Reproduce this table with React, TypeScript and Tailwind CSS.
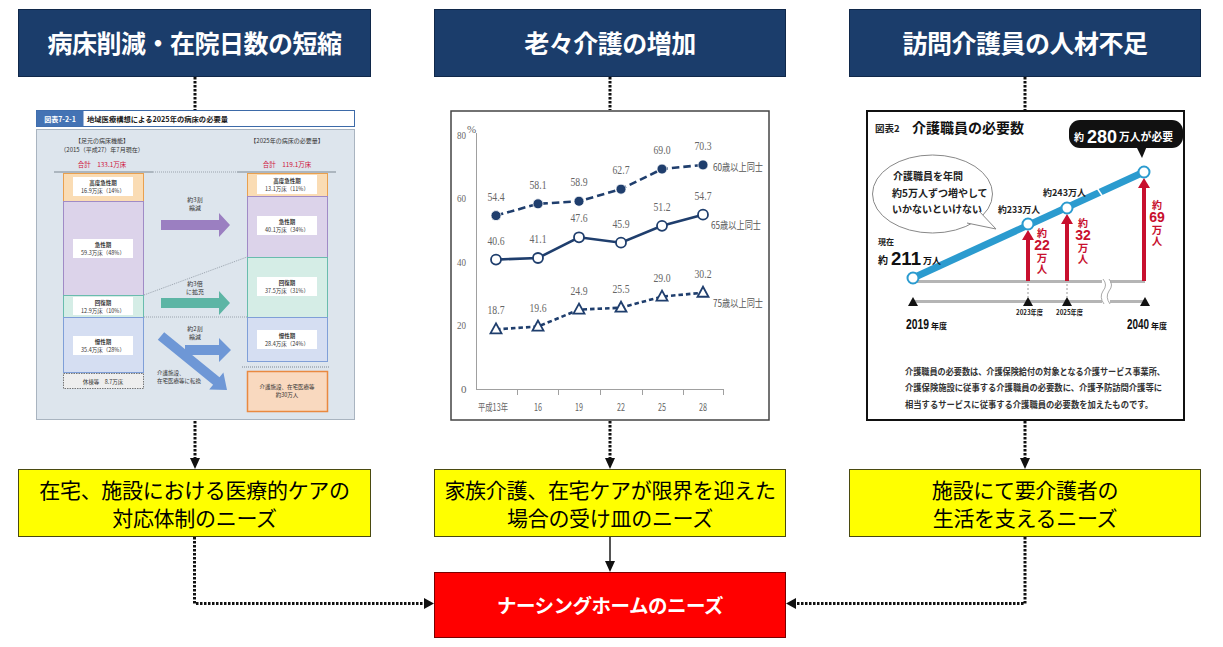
const JP = "'Noto Sans CJK JP', sans-serif"
const SERIF = "'Liberation Serif', 'Noto Sans CJK JP', serif"

function DotDown({ h, arrow }: { h: number; arrow?: boolean }) {
  const end = arrow ? h - 10 : h
  return (
    <svg width="12" height={h} className="block shrink-0">
      <line x1="6" y1="0" x2="6" y2={end} stroke="#111" strokeWidth="3" strokeDasharray="2.5 1.5" />
      {arrow && <polygon points={`1,${h - 11} 11,${h - 11} 6,${h}`} fill="#111" />}
    </svg>
  )
}

function Lbl({ cx, y, a, b, h = 19 }: { cx: number; y: number; a: string; b: string; h?: number }) {
  return (
    <g>
      <rect x={cx - 30} y={y} width="60" height={h} fill="#fff" />
      <text x={cx} y={y + 8} fontSize="5.5" fontWeight="700" textAnchor="middle" fill="#333">{a}</text>
      <text x={cx} y={y + 15.5} fontSize="5.5" textAnchor="middle" fill="#333">{b}</text>
    </g>
  )
}

function LeftChart() {
  return (
    <svg width="320" height="311" viewBox="35 110 320 311" className="block" fontFamily={JP}>
      {/* title bar */}
      <rect x="36.5" y="110.5" width="318" height="16" fill="#fff" stroke="#3d6aa8" />
      <rect x="36.5" y="110.5" width="47" height="16" fill="#4473b4" />
      <text x="60" y="121.5" fontSize="7" fontWeight="700" fill="#fff" textAnchor="middle">図表7-2-1</text>
      <text x="87" y="121.5" fontSize="7.3" fontWeight="700" fill="#1a1a1a">地域医療構想による2025年の病床の必要量</text>
      {/* body */}
      <rect x="36.5" y="129.5" width="318" height="290" fill="#dde5ed" stroke="#a9b4c0" />
      <text x="102" y="143" fontSize="6" textAnchor="middle" fill="#333">【足元の病床機能】</text>
      <text x="102" y="152" fontSize="6" textAnchor="middle" fill="#333">（2015（平成27）年7月現在）</text>
      <text x="102" y="167" fontSize="6.5" textAnchor="middle" fill="#d0143c">合計　133.1万床</text>
      <text x="287" y="143" fontSize="6" textAnchor="middle" fill="#333">【2025年の病床の必要量】</text>
      <text x="287" y="167" fontSize="6.5" textAnchor="middle" fill="#d0143c">合計　119.1万床</text>
      <line x1="54" y1="172" x2="153" y2="172" stroke="#7d8792" strokeWidth="1.2" />
      <line x1="153" y1="172" x2="237" y2="172" stroke="#9aa3ad" strokeWidth="1" strokeDasharray="1 1" />
      <line x1="237" y1="172" x2="336" y2="172" stroke="#7d8792" strokeWidth="1.2" />

      {/* left bar */}
      <rect x="63.5" y="173.5" width="80" height="28" fill="#fadcb4" stroke="#e9a04f" />
      <rect x="63.5" y="201.5" width="80" height="94" fill="#dcd3ea" stroke="#a08bc6" />
      <rect x="63.5" y="295.5" width="80" height="22" fill="#d5ede6" stroke="#69bcae" />
      <rect x="63.5" y="317.5" width="80" height="55" fill="#d5def2" stroke="#7f9fd8" />
      <rect x="63.5" y="373.5" width="80" height="15" fill="#eeeeee" stroke="#777" strokeDasharray="1.5 1" />
      <Lbl cx={103} y={177} a="高度急性期" b="16.9万床（14%）" />
      <Lbl cx={103} y={239} a="急性期" b="59.3万床（48%）" />
      <Lbl cx={103} y={297} a="回復期" b="12.9万床（10%）" h={18} />
      <Lbl cx={103} y={336} a="慢性期" b="35.4万床（28%）" />
      <text x="103" y="383.5" fontSize="5.5" textAnchor="middle" fill="#333">休棟等　8.7万床</text>

      {/* right bar */}
      <rect x="247.5" y="173.5" width="80" height="23" fill="#fadcb4" stroke="#e9a04f" />
      <rect x="247.5" y="196.5" width="80" height="61" fill="#dcd3ea" stroke="#a08bc6" />
      <rect x="247.5" y="257.5" width="80" height="60" fill="#d5ede6" stroke="#69bcae" />
      <rect x="247.5" y="317.5" width="80" height="44" fill="#d5def2" stroke="#7f9fd8" />
      <Lbl cx={287} y={175} a="高度急性期" b="13.1万床（11%）" />
      <Lbl cx={287} y={216} a="急性期" b="40.1万床（34%）" />
      <Lbl cx={287} y={277} a="回復期" b="37.5万床（31%）" />
      <Lbl cx={287} y={330} a="慢性期" b="28.4万床（24%）" />
      <line x1="242" y1="367" x2="330" y2="367" stroke="#7d8792" strokeDasharray="1 1" />
      <rect x="247.5" y="371.5" width="80" height="40" fill="#f9d9bf" stroke="#e98940" strokeWidth="1.5" />
      <text x="287" y="389" fontSize="5.5" textAnchor="middle" fill="#333">介護施設、在宅医療等</text>
      <text x="287" y="397" fontSize="5.5" textAnchor="middle" fill="#333">約30万人</text>

      {/* guide lines */}
      <line x1="144" y1="295" x2="247" y2="257" stroke="#9aa3ad" strokeDasharray="1 1" />
      <line x1="144" y1="317" x2="247" y2="317" stroke="#9aa3ad" strokeDasharray="1 1" />

      {/* arrows */}
      <polygon points="161,220 219,220 219,213 230,225 219,237 219,230 161,230" fill="#9b7fc1" />
      <text x="195" y="202" fontSize="6" textAnchor="middle" fill="#333">約3割</text>
      <text x="195" y="210" fontSize="6" textAnchor="middle" fill="#333">縮減</text>
      <polygon points="161,298 219,298 219,291 230,303 219,315 219,308 161,308" fill="#5db5a5" />
      <text x="195" y="286" fontSize="6" textAnchor="middle" fill="#333">約3倍</text>
      <text x="195" y="294" fontSize="6" textAnchor="middle" fill="#333">に拡充</text>
      <polygon points="157.8,339.8 213.1,384.8 209.2,389.4 227,390 223.4,372.6 219.5,377.2 164.2,332.2" fill="#6e97d6" />
      <polygon points="185,345 219,345 219,338 231,350 219,362 219,355 185,355" fill="#6e97d6" />
      <text x="195" y="331" fontSize="6" textAnchor="middle" fill="#333">約2割</text>
      <text x="195" y="339" fontSize="6" textAnchor="middle" fill="#333">縮減</text>
      <text x="157" y="375" fontSize="5.5" fill="#333">介護施設、</text>
      <text x="157" y="383" fontSize="5.5" fill="#333">在宅医療等に転換</text>
    </svg>
  )
}

const XS = [496, 538, 579, 621, 662, 703]
const yv = (v: number) => 389 - v * 3.1875
const S60 = [54.4, 58.1, 58.9, 62.7, 69.0, 70.3]
const S65 = [40.6, 41.1, 47.6, 45.9, 51.2, 54.7]
const S75 = [18.7, 19.6, 24.9, 25.5, 29.0, 30.2]
const NAVY = '#1f3e6d'

function pts(s: number[]) {
  return s.map((v, i) => `${XS[i]},${yv(v)}`).join(' ')
}

function MiddleChart() {
  return (
    <svg width="320" height="311" viewBox="450 110 320 311" className="block" fontFamily={SERIF}>
      <rect x="451" y="111" width="318" height="309" fill="#fff" stroke="#444" strokeWidth="1.5" />
      <line x1="476.5" y1="133" x2="476.5" y2="389" stroke="#a0a0a0" />
      <line x1="476" y1="389.5" x2="723" y2="389.5" stroke="#a0a0a0" />
      {[517, 558, 600, 642, 683, 723].map((x) => (
        <line key={x} x1={x + 0.5} y1="389" x2={x + 0.5} y2="395" stroke="#a0a0a0" />
      ))}
      <text x="457" y="139" fontSize="11" fill="#666" textLength="9" lengthAdjust="spacingAndGlyphs">80</text>
      <text x="467" y="133" fontSize="11" fill="#666">%</text>
      <text x="457" y="202" fontSize="11" fill="#666" textLength="9" lengthAdjust="spacingAndGlyphs">60</text>
      <text x="457" y="266" fontSize="11" fill="#666" textLength="9" lengthAdjust="spacingAndGlyphs">40</text>
      <text x="457" y="329" fontSize="11" fill="#666" textLength="9" lengthAdjust="spacingAndGlyphs">20</text>
      <text x="461" y="393" fontSize="11" fill="#666">0</text>
      {['平成13年', '16', '19', '22', '25', '28'].map((t, i) => (
        <text key={t} x={i === 0 ? 478 : XS[i] - 4} y="411" fontSize="10.5" fill="#666" fontFamily={JP} textLength={i === 0 ? 30 : 8} lengthAdjust="spacingAndGlyphs">{t}</text>
      ))}

      <polyline points={pts(S60)} fill="none" stroke={NAVY} strokeWidth="2.6" strokeDasharray="7.5 4" />
      <polyline points={pts(S65)} fill="none" stroke={NAVY} strokeWidth="2.6" />
      <polyline points={pts(S75)} fill="none" stroke={NAVY} strokeWidth="2.6" strokeDasharray="4.5 3" />
      {S60.map((v, i) => (
        <circle key={'a' + i} cx={XS[i]} cy={yv(v)} r="5" fill={NAVY} stroke="#fff" strokeWidth="0.8" />
      ))}
      {S65.map((v, i) => (
        <circle key={'b' + i} cx={XS[i]} cy={yv(v)} r="5" fill="#fff" stroke={NAVY} strokeWidth="1.8" />
      ))}
      {S75.map((v, i) => {
        const y = yv(v)
        return <polygon key={'c' + i} points={`${XS[i]},${y - 6} ${XS[i] - 5.5},${y + 4} ${XS[i] + 5.5},${y + 4}`} fill="#fff" stroke={NAVY} strokeWidth="1.8" />
      })}
      {[S60, S65, S75].map((s, k) =>
        s.map((v, i) => (
          <text key={k + '-' + i} x={XS[i]} y={yv(v) - 15} fontSize="12" fill="#666" textAnchor="middle" textLength="17" lengthAdjust="spacingAndGlyphs">
            {v.toFixed(1)}
          </text>
        ))
      )}
      <text x="713" y="171" fontSize="10" fill="#555" fontFamily={JP} textLength="50" lengthAdjust="spacingAndGlyphs">60歳以上同士</text>
      <text x="711" y="229" fontSize="10" fill="#555" fontFamily={JP} textLength="50" lengthAdjust="spacingAndGlyphs">65歳以上同士</text>
      <text x="713" y="307" fontSize="10" fill="#555" fontFamily={JP} textLength="50" lengthAdjust="spacingAndGlyphs">75歳以上同士</text>
    </svg>
  )
}

const BLUE = '#2b9bcf'
const RED = '#c8102e'

function RedArrow({ x, tip }: { x: number; tip: number }) {
  return (
    <g>
      <line x1={x} y1="281" x2={x} y2={tip + 9} stroke={RED} strokeWidth="4" />
      <polygon points={`${x - 6},${tip + 10} ${x + 6},${tip + 10} ${x},${tip}`} fill={RED} />
    </g>
  )
}

function RedTag({ x, y, n }: { x: number; y: number; n: string }) {
  return (
    <g fill={RED} fontWeight="700" textAnchor="middle">
      <text x={x} y={y} fontSize="10">約</text>
      <text x={x} y={y + 13} fontSize="14" fontFamily="'Liberation Sans', sans-serif">{n}</text>
      <text x={x} y={y + 25} fontSize="10.5">万</text>
      <text x={x} y={y + 36} fontSize="10.5">人</text>
    </g>
  )
}

function RightChart() {
  return (
    <svg width="320" height="311" viewBox="865 110 320 311" className="block" fontFamily={JP}>
      <rect x="867" y="111" width="317" height="309" fill="#fff" stroke="#111" strokeWidth="2" />
      <text x="875" y="132" fontSize="9.5" fontWeight="700" fill="#222">図表2</text>
      <text x="912" y="133" fontSize="14" fontWeight="700" fill="#111">介護職員の必要数</text>

      {/* callout */}
      <rect x="1069" y="120" width="114" height="28" rx="11" fill="#111" />
      <polygon points="1136,146 1147,146 1142,158" fill="#111" />
      <text x="1074" y="141" fontSize="10" fontWeight="700" fill="#fff">約</text>
      <text x="1087" y="143" fontSize="19" fontWeight="700" fill="#fff" fontFamily="'Liberation Sans', sans-serif" textLength="30" lengthAdjust="spacingAndGlyphs">280</text>
      <text x="1119" y="141" fontSize="10.8" fontWeight="700" fill="#fff">万人が必要</text>

      {/* bubble */}
      <ellipse cx="932.5" cy="194" rx="60" ry="39" fill="#fff" stroke="#888" />
      <path d="M967 223 L996 229 L979 211" fill="#fff" stroke="#888" />
      <text x="893" y="180" fontSize="10" fontWeight="700" fill="#222">介護職員を年間</text>
      <text x="892" y="197" fontSize="10" fontWeight="700" fill="#222">約5万人ずつ増やして</text>
      <text x="892" y="213" fontSize="10" fontWeight="700" fill="#222">いかないといけない</text>

      {/* timeline */}
      <line x1="913" y1="281.5" x2="1145" y2="281.5" stroke="#b5b5b5" strokeWidth="3" />
      <line x1="913" y1="301.5" x2="1145" y2="301.5" stroke="#b5b5b5" strokeWidth="3" />
      <rect x="1102" y="278" width="8" height="27" fill="#fff" />
      <path d="M1103 279 q5 6 0 12 q-4 6 1 13" fill="none" stroke="#aaa" />
      <path d="M1109 279 q5 6 0 12 q-4 6 1 13" fill="none" stroke="#aaa" />
      <line x1="1028" y1="284" x2="1028" y2="297" stroke="#999" strokeDasharray="2 2" />
      <line x1="1067" y1="284" x2="1067" y2="297" stroke="#999" strokeDasharray="2 2" />
      {[913, 1028, 1067, 1145].map((x) => (
        <polygon key={x} points={`${x - 5},306 ${x + 5},306 ${x},297`} fill="#111" />
      ))}

      {/* growth line */}
      <line x1="913" y1="278" x2="1144" y2="172" stroke={BLUE} strokeWidth="7" />
      <line x1="1097" y1="188" x2="1103" y2="197" stroke="#fff" strokeWidth="1.5" />
      <RedArrow x={1028} tip={230} />
      <RedArrow x={1067} tip={214} />
      <RedArrow x={1144} tip={178} />
      {[
        [913, 278],
        [1028, 224],
        [1067, 208],
        [1144, 172],
      ].map(([x, y]) => (
        <circle key={x} cx={x} cy={y} r="5.5" fill="#fff" stroke={BLUE} strokeWidth="2" />
      ))}

      <text x="878" y="245" fontSize="8" fontWeight="700" fill="#222">現在</text>
      <text x="878" y="264" fontSize="10" fontWeight="700" fill="#111">約</text>
      <text x="891" y="265" fontSize="18" fontWeight="700" fill="#111" fontFamily="'Liberation Sans', sans-serif" textLength="30" lengthAdjust="spacingAndGlyphs">211</text>
      <text x="923" y="264" fontSize="9" fontWeight="700" fill="#111">万人</text>
      <text x="998" y="213" fontSize="9.5" fontWeight="700" fill="#222" textLength="42" lengthAdjust="spacingAndGlyphs">約233万人</text>
      <text x="1043" y="196" fontSize="9.5" fontWeight="700" fill="#222" textLength="43" lengthAdjust="spacingAndGlyphs">約243万人</text>
      <RedTag x={1042} y={237} n="22" />
      <RedTag x={1083} y={227} n="32" />
      <RedTag x={1157} y={209} n="69" />

      <text x="906" y="329" fontSize="15" fontWeight="700" fill="#111" fontFamily="'Liberation Sans', sans-serif" textLength="23" lengthAdjust="spacingAndGlyphs">2019</text>
      <text x="931" y="329" fontSize="8" fontWeight="700" fill="#111">年度</text>
      <text x="1016" y="315" fontSize="7" fontWeight="700" fill="#222" textLength="27" lengthAdjust="spacingAndGlyphs">2023年度</text>
      <text x="1056" y="315" fontSize="7" fontWeight="700" fill="#222" textLength="27" lengthAdjust="spacingAndGlyphs">2025年度</text>
      <text x="1127" y="329" fontSize="15" fontWeight="700" fill="#111" fontFamily="'Liberation Sans', sans-serif" textLength="22" lengthAdjust="spacingAndGlyphs">2040</text>
      <text x="1151" y="329" fontSize="8" fontWeight="700" fill="#111">年度</text>

      <g fontSize="9" fontWeight="700" fill="#333">
        <text x="905" y="375" textLength="260" lengthAdjust="spacingAndGlyphs">介護職員の必要数は、介護保険給付の対象となる介護サービス事業所、</text>
        <text x="905" y="391" textLength="257" lengthAdjust="spacingAndGlyphs">介護保険施設に従事する介護職員の必要数に、介護予防訪問介護等に</text>
        <text x="905" y="408" textLength="248" lengthAdjust="spacingAndGlyphs">相当するサービスに従事する介護職員の必要数を加えたものです。</text>
      </g>
    </svg>
  )
}

function Column({ w, title, chart, need }: { w: string; title: string; chart: React.ReactNode; need: string[] }) {
  return (
    <div className={`flex flex-col items-center ${w}`}>
      <div className="h-[68px] w-full bg-[#1b3d6b] border border-[#10284a] flex items-center justify-center text-white font-bold text-[25px] tracking-[-0.5px]">
        {title}
      </div>
      <DotDown h={33} />
      {chart}
      <DotDown h={48} arrow />
      <div className="h-[68px] w-full bg-[#ffff00] border border-[#4a4a10] flex flex-col items-center justify-center text-[21px] leading-[28px] text-black tracking-[-0.3px]">
        {need.map((n) => (
          <div key={n}>{n}</div>
        ))}
      </div>
    </div>
  )
}

export default function App() {
  return (
    <div className="w-[1223px] h-[647px] bg-white overflow-hidden font-['Noto_Sans_CJK_JP',sans-serif]">
      <div className="flex pt-[9px] pl-[18px] gap-x-[63px]">
        <Column w="w-[353px]" title="病床削減・在院日数の短縮" chart={<LeftChart />} need={['在宅、施設における医療的ケアの', '対応体制のニーズ']} />
        <Column w="w-[352px]" title="老々介護の増加" chart={<MiddleChart />} need={['家族介護、在宅ケアが限界を迎えた', '場合の受け皿のニーズ']} />
        <Column w="w-[352px]" title="訪問介護員の人材不足" chart={<RightChart />} need={['施設にて要介護者の', '生活を支えるニーズ']} />
      </div>
      <div className="flex">
        <svg width="434" height="101" className="block shrink-0">
          <path d="M194.5 0 V66.5 H424" fill="none" stroke="#111" strokeWidth="3" strokeDasharray="2.5 1.5" />
          <polygon points="424,61 424,72 434,66.5" fill="#111" />
        </svg>
        <div className="w-[352px] flex flex-col">
          <svg width="352" height="35" className="block">
            <line x1="176" y1="0" x2="176" y2="25" stroke="#555" strokeWidth="2" />
            <polygon points="171,24 181,24 176,35" fill="#111" />
          </svg>
          <div className="h-[66px] bg-[#ff0000] border border-[#7a0000] flex items-center justify-center text-white font-bold text-[19.5px] tracking-[-0.5px]">
            ナーシングホームのニーズ
          </div>
        </div>
        <svg width="437" height="101" className="block shrink-0">
          <path d="M239 0 V66.5 H10" fill="none" stroke="#111" strokeWidth="3" strokeDasharray="2.5 1.5" />
          <polygon points="10,61 10,72 0,66.5" fill="#111" />
        </svg>
      </div>
    </div>
  )
}
